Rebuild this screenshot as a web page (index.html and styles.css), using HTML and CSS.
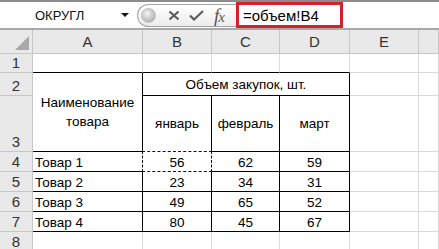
FILE: index.html
```html
<!DOCTYPE html>
<html lang="ru">
<head>
  <meta charset="UTF-8" />
  <title>Excel</title>
  <link rel="stylesheet" href="styles.css">
</head>
<body>

  <!-- строка формул -->
  <div class="toolbar">
    <div class="namebox">
      <span class="name">ОКРУГЛ</span>
      <span class="drop"></span>
    </div>
    <div class="fx-buttons">
      <span class="grip"></span>
      <svg class="btn-x" width="12" height="11" viewBox="0 0 12 11">
        <path d="M1.5 1.5 L10.5 9.5 M10.5 1.5 L1.5 9.5" stroke="#5c5c5c" stroke-width="2.2" fill="none"/>
      </svg>
      <svg class="btn-ok" width="15" height="11" viewBox="0 0 15 11">
        <path d="M1 5.5 L5 9.5 L14 1" stroke="#5c5c5c" stroke-width="2.2" fill="none"/>
      </svg>
      <span class="fx">f<i>x</i></span>
    </div>
    <div class="formula">=объем!B4</div>
    <div class="formula-rest"></div>
  </div>

  <!-- лист -->
  <div class="sheet">
    <div class="hd corner">
      <svg width="14" height="14" viewBox="0 0 14 14"><path d="M14 0 L14 14 L0 14 Z" fill="#a9a9a9"/></svg>
    </div>
    <div class="hd">A</div>
    <div class="hd">B</div>
    <div class="hd">C</div>
    <div class="hd">D</div>
    <div class="hd">E</div>
    <div class="hd"></div>

    <div class="rh">1</div>
    <div class="c top"></div>
    <div class="c top"></div>
    <div class="c top"></div>
    <div class="c top"></div>
    <div class="c"></div>
    <div class="c"></div>

    <div class="rh">2</div>
    <div class="c t head-name">Наименование<br>товара</div>
    <div class="c t head-group">Объем закупок, шт.</div>
    <div class="c"></div>
    <div class="c"></div>

    <div class="rh">3</div>
    <div class="c t mid">январь</div>
    <div class="c t mid">февраль</div>
    <div class="c t mid">март</div>
    <div class="c"></div>
    <div class="c"></div>

    <div class="rh">4</div>
    <div class="c t txt">Товар 1</div>
    <div class="c t num ants">56</div>
    <div class="c t num">62</div>
    <div class="c t num">59</div>
    <div class="c"></div>
    <div class="c"></div>

    <div class="rh">5</div>
    <div class="c t txt">Товар 2</div>
    <div class="c t num">23</div>
    <div class="c t num">34</div>
    <div class="c t num">31</div>
    <div class="c"></div>
    <div class="c"></div>

    <div class="rh">6</div>
    <div class="c t txt">Товар 3</div>
    <div class="c t num">49</div>
    <div class="c t num">65</div>
    <div class="c t num">52</div>
    <div class="c"></div>
    <div class="c"></div>

    <div class="rh">7</div>
    <div class="c t txt">Товар 4</div>
    <div class="c t num">80</div>
    <div class="c t num">45</div>
    <div class="c t num">67</div>
    <div class="c"></div>
    <div class="c"></div>

    <div class="rh">8</div>
    <div class="c"></div>
    <div class="c"></div>
    <div class="c"></div>
    <div class="c"></div>
    <div class="c"></div>
    <div class="c"></div>
  </div>

</body>
</html>
```

FILE: styles.css
```css
* {
  box-sizing: border-box;
}

body {
  margin: 0;
  padding: 0;
  width: 439px;
  height: 249px;
  overflow: hidden;
  background-color: white;
  font-family: 'Liberation Sans', 'Noto Sans', sans-serif;
  color: #000;
}

/* строка формул */
.toolbar {
  display: flex;
  height: 30px;
  border-top: 2px solid #8c8c8c;
  border-bottom: 2px solid #a9a9a9;
  background-color: white;
}

.namebox {
  width: 137px;
  display: flex;
  align-items: center;
}

.name {
  padding-left: 35px;
  font-size: 13px;
  color: #111;
}

.drop {
  margin-left: auto;
  margin-right: 8px;
  width: 0;
  height: 0;
  border-left: 4px solid transparent;
  border-right: 4px solid transparent;
  border-top: 4px solid #111;
}

.fx-buttons {
  width: 99px;
  height: 23px;
  align-self: center;
  display: flex;
  align-items: center;
  border: 1px solid #a3a3a3;
  border-right: none;
  border-radius: 12px 0 0 12px;
  background: linear-gradient(#ffffff, #ececec);
}

.grip {
  width: 15px;
  height: 15px;
  margin-left: 3px;
  border-radius: 50%;
  background: radial-gradient(circle at 40% 35%, #f4f4f4, #b3b3b3 75%);
  border: 1px solid #bdbdbd;
}

.btn-x {
  margin-left: 12px;
}

.btn-ok {
  margin-left: 9px;
}

.fx {
  margin-left: 10px;
  font-family: 'Liberation Serif', serif;
  font-style: italic;
  font-size: 19px;
  line-height: 1;
  color: #555;
  letter-spacing: -1px;
}

.fx i {
  font-size: 15px;
}

.formula {
  width: 107px;
  border: 3px solid #d3232a;
  padding-left: 4px;
  font-size: 15px;
  display: flex;
  align-items: center;
}

.formula-rest {
  flex: 1;
}

/* лист */
.sheet {
  display: grid;
  grid-template-columns: 33px 110px 69px 68px 70px 69px 1fr;
  grid-template-rows: 24px 19px 23px 56px 20px 20px 20px 20px 20px;
  font-size: 13.5px;
}

.hd,
.rh {
  background-color: #e9e9e9;
  border-right: 1px solid #c6c6c6;
  border-bottom: 1px solid #c6c6c6;
  color: #333;
  font-size: 15px;
  display: flex;
  justify-content: center;
  align-items: center;
}

.rh {
  align-items: flex-end;
  padding-bottom: 1px;
}

.corner {
  justify-content: flex-end;
  align-items: flex-end;
  padding: 0 3px 3px 0;
}

.c {
  border-right: 1px solid #dadada;
  border-bottom: 1px solid #dadada;
  display: flex;
  align-items: flex-end;
  padding-bottom: 1px;
}

.c.top {
  border-bottom-color: #000;
}

.c.t {
  border-right-color: #000;
  border-bottom-color: #000;
}

.head-name {
  grid-row: span 2;
  justify-content: center;
  align-items: center;
  text-align: center;
  line-height: 19px;
  padding-bottom: 0;
}

.head-group {
  grid-column: span 3;
  justify-content: center;
  align-items: center;
  padding-bottom: 0;
}

.mid {
  justify-content: center;
  align-items: center;
  padding-bottom: 0;
}

.txt {
  padding-left: 2px;
}

.num {
  justify-content: center;
}

.ants {
  position: relative;
}

.ants::before,
.ants::after {
  content: "";
  position: absolute;
  top: -1px;
  left: -1px;
  right: -1px;
  bottom: -1px;
}

.ants::before {
  border: 1px solid #fff;
}

.ants::after {
  border: 1px dashed #111;
}
```
